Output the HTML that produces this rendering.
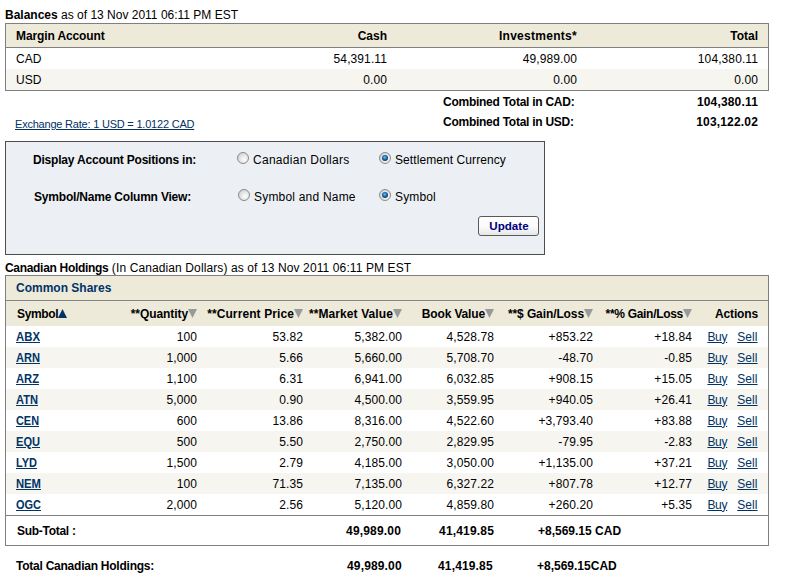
<!DOCTYPE html>
<html><head><meta charset="utf-8">
<style>
*{box-sizing:border-box;margin:0;padding:0}
html,body{width:791px;height:587px;background:#fff;overflow:hidden}
body{font-family:"Liberation Sans",sans-serif;font-size:12px;color:#000;position:relative}
.abs{position:absolute;white-space:nowrap}
b{font-weight:bold}
table{border-collapse:separate;border-spacing:0;position:absolute;table-layout:fixed}
td,th{white-space:nowrap;overflow:visible;font-size:12px;padding:0;vertical-align:middle}
th{font-weight:bold}
.r{text-align:right}
td.r{letter-spacing:0.1px}
.l{text-align:left}
a{color:#003366;text-decoration:underline}
#t1{left:5px;top:23px;width:764px;border:1px solid #7f7f7f}
#t1 tr.h th{height:24px;background:#edeada;border-bottom:1px solid #7f7f7f;padding-top:1px}
#t1 tr.a td{height:21px;background:#fff;padding-top:1px}
#t1 tr.b td{height:21px;background:#f6f5f0;padding-top:1px}
#box{left:5px;top:141px;width:540px;height:114px;background:#ecf0f5;border:1px solid #4d4d4d}
.radio{position:absolute;width:12px;height:12px;border-radius:50%;border:1px solid #8a8c8c;background:radial-gradient(circle at 62% 62%,#fdfdfd 0%,#ececec 35%,#c4c4c4 100%)}
.radio.on::after{content:"";position:absolute;left:2px;top:2px;width:6px;height:6px;border-radius:50%;background:radial-gradient(circle at 45% 40%,#6fcdf8 0%,#2a86c8 28%,#15386a 68%,#15386a 100%)}
#btn{left:478px;top:216px;width:61px;height:20px;border:1px solid #5a5a5a;border-radius:3px;background:linear-gradient(#ffffff 0%,#fbfbfb 55%,#e6e6e6 100%);text-align:center;line-height:19px;color:#000080}
#btn span{display:inline-block;font-weight:bold;font-size:10px;transform:scaleX(1.16);transform-origin:50% 50%}
#t2{left:5px;top:275px;width:764px;border:1px solid #7f7f7f}
#t2 tr.cs td{height:25px;background:#edeada;color:#003366;font-weight:bold;padding-left:10px;border-bottom:1px solid #858585}
#t2 tr.h th{height:25px;background:#edeada;padding-top:1px}
#t2 tr.d td{height:21px}
#t2 tr.e td{background:#f6f5f0}
#t2 tr.st td{height:30px;border-top:1px solid #7f7f7f;font-weight:bold}
a.y{display:inline-block;font-weight:bold;transform-origin:0 50%}
span.g{display:inline-block;width:10px}a.s{letter-spacing:0.1px;margin-right:0.4px}a.bu{letter-spacing:-0.3px}
svg.t{width:9px;height:9px;vertical-align:baseline;display:inline-block}
</style></head><body>
<div class="abs" style="left:5px;top:8px"><b>Balances</b> as of 13 Nov 2011 06:11 PM EST</div>
<table id="t1">
<colgroup><col style="width:10px"><col style="width:200px"><col style="width:171px"><col style="width:190px"><col style="width:181px"><col style="width:10px"></colgroup>
<tr class="h"><th></th><th class="l" style="letter-spacing:-0.12px">Margin Account</th><th class="r">Cash</th><th class="r" style="letter-spacing:0.28px">Investments*</th><th class="r">Total</th><th></th></tr>
<tr class="a"><td></td><td>CAD</td><td class="r">54,391.11</td><td class="r">49,989.00</td><td class="r">104,380.11</td><td></td></tr>
<tr class="b"><td></td><td>USD</td><td class="r">0.00</td><td class="r">0.00</td><td class="r">0.00</td><td></td></tr>
</table>
<div class="abs" style="left:443px;top:95px;letter-spacing:-0.26px"><b>Combined Total in CAD:</b></div>
<div class="abs r" style="right:33px;top:95px;letter-spacing:0.17px"><b>104,380.11</b></div>
<div class="abs" style="left:443px;top:115px;letter-spacing:-0.26px"><b>Combined Total in USD:</b></div>
<div class="abs r" style="right:33px;top:115px;letter-spacing:0.17px"><b>103,122.02</b></div>
<div class="abs" style="left:15px;top:118px;font-size:11px;letter-spacing:-0.21px"><a>Exchange Rate: 1 USD = 1.0122 CAD</a></div>

<div id="box" class="abs"></div>
<div class="abs" style="left:33px;top:153px;letter-spacing:-0.2px"><b>Display Account Positions in:</b></div>
<div class="abs" style="left:34px;top:190px;letter-spacing:-0.2px"><b>Symbol/Name Column View:</b></div>
<div class="radio" style="left:237px;top:152px"></div>
<div class="abs" style="left:253px;top:153px;letter-spacing:0.28px">Canadian Dollars</div>
<div class="radio on" style="left:379px;top:152px"></div>
<div class="abs" style="left:395px;top:153px;letter-spacing:0.08px">Settlement Currency</div>
<div class="radio" style="left:238px;top:189px"></div>
<div class="abs" style="left:254px;top:190px;letter-spacing:0.2px">Symbol and Name</div>
<div class="radio on" style="left:379px;top:189px"></div>
<div class="abs" style="left:395px;top:190px;letter-spacing:0.15px">Symbol</div>
<div id="btn" class="abs"><span>Update</span></div>

<div class="abs" style="left:5px;top:261px"><b style="letter-spacing:-0.31px">Canadian Holdings</b><span style="letter-spacing:0.11px"> (In Canadian Dollars) as of 13 Nov 2011 06:11 PM EST</span></div>
<table id="t2">
<colgroup><col style="width:10px"><col style="width:81px"><col style="width:100px"><col style="width:106px"><col style="width:99px"><col style="width:92px"><col style="width:99px"><col style="width:99px"><col style="width:66px"><col style="width:10px"></colgroup>
<tr class="cs"><td colspan="10">Common Shares</td></tr>
<tr class="h"><th></th><th class="l" style="padding-left:1px"><span style="letter-spacing:-0.35px">Symbol</span><svg class="t" viewBox="0 0 9 9"><path d="M4.5 0L9 9H0z" fill="#003366"/></svg></th><th class="r"><span style="letter-spacing:-0.08px">**Quantity</span><svg class="t" viewBox="0 0 9 9"><path d="M0 0H9L4.5 9z" fill="#999"/></svg></th><th class="r"><span style="letter-spacing:0.1px">**Current Price</span><svg class="t" viewBox="0 0 9 9"><path d="M0 0H9L4.5 9z" fill="#999"/></svg></th><th class="r"><span style="letter-spacing:0.1px">**Market Value</span><svg class="t" viewBox="0 0 9 9"><path d="M0 0H9L4.5 9z" fill="#999"/></svg></th><th class="r"><span style="letter-spacing:-0.15px">Book Value</span><svg class="t" viewBox="0 0 9 9"><path d="M0 0H9L4.5 9z" fill="#999"/></svg></th><th class="r"><span style="letter-spacing:-0.1px">**$ Gain/Loss</span><svg class="t" viewBox="0 0 9 9"><path d="M0 0H9L4.5 9z" fill="#999"/></svg></th><th class="r"><span style="letter-spacing:-0.3px">**% Gain/Loss</span><svg class="t" viewBox="0 0 9 9"><path d="M0 0H9L4.5 9z" fill="#999"/></svg></th><th class="r" style="letter-spacing:-0.14px">Actions</th><th></th></tr>
<tr class="d"><td></td><td><a class="y" style="transform:scaleX(0.9470)">ABX</a></td><td class="r">100</td><td class="r">53.82</td><td class="r">5,382.00</td><td class="r">4,528.78</td><td class="r">+853.22</td><td class="r">+18.84</td><td class="r"><a class="bu">Buy</a><span class="g"></span><a class="s">Sell</a></td><td></td></tr>
<tr class="d e"><td></td><td><a class="y" style="transform:scaleX(0.9231)">ARN</a></td><td class="r">1,000</td><td class="r">5.66</td><td class="r">5,660.00</td><td class="r">5,708.70</td><td class="r">-48.70</td><td class="r">-0.85</td><td class="r"><a class="bu">Buy</a><span class="g"></span><a class="s">Sell</a></td><td></td></tr>
<tr class="d"><td></td><td><a class="y" style="transform:scaleX(0.9322)">ARZ</a></td><td class="r">1,100</td><td class="r">6.31</td><td class="r">6,941.00</td><td class="r">6,032.85</td><td class="r">+908.15</td><td class="r">+15.05</td><td class="r"><a class="bu">Buy</a><span class="g"></span><a class="s">Sell</a></td><td></td></tr>
<tr class="d e"><td></td><td><a class="y" style="transform:scaleX(0.9251)">ATN</a></td><td class="r">5,000</td><td class="r">0.90</td><td class="r">4,500.00</td><td class="r">3,559.95</td><td class="r">+940.05</td><td class="r">+26.41</td><td class="r"><a class="bu">Buy</a><span class="g"></span><a class="s">Sell</a></td><td></td></tr>
<tr class="d"><td></td><td><a class="y" style="transform:scaleX(0.9075)">CEN</a></td><td class="r">600</td><td class="r">13.86</td><td class="r">8,316.00</td><td class="r">4,522.60</td><td class="r">+3,793.40</td><td class="r">+83.88</td><td class="r"><a class="bu">Buy</a><span class="g"></span><a class="s">Sell</a></td><td></td></tr>
<tr class="d e"><td></td><td><a class="y" style="transform:scaleX(0.9225)">EQU</a></td><td class="r">500</td><td class="r">5.50</td><td class="r">2,750.00</td><td class="r">2,829.95</td><td class="r">-79.95</td><td class="r">-2.83</td><td class="r"><a class="bu">Buy</a><span class="g"></span><a class="s">Sell</a></td><td></td></tr>
<tr class="d"><td></td><td><a class="y" style="transform:scaleX(0.9168)">LYD</a></td><td class="r">1,500</td><td class="r">2.79</td><td class="r">4,185.00</td><td class="r">3,050.00</td><td class="r">+1,135.00</td><td class="r">+37.21</td><td class="r"><a class="bu">Buy</a><span class="g"></span><a class="s">Sell</a></td><td></td></tr>
<tr class="d e"><td></td><td><a class="y" style="transform:scaleX(0.9373)">NEM</a></td><td class="r">100</td><td class="r">71.35</td><td class="r">7,135.00</td><td class="r">6,327.22</td><td class="r">+807.78</td><td class="r">+12.77</td><td class="r"><a class="bu">Buy</a><span class="g"></span><a class="s">Sell</a></td><td></td></tr>
<tr class="d"><td></td><td><a class="y" style="transform:scaleX(0.9143)">OGC</a></td><td class="r">2,000</td><td class="r">2.56</td><td class="r">5,120.00</td><td class="r">4,859.80</td><td class="r">+260.20</td><td class="r">+5.35</td><td class="r"><a class="bu">Buy</a><span class="g"></span><a class="s">Sell</a></td><td></td></tr>
<tr class="st"><td></td><td colspan="3" style="letter-spacing:-0.28px;padding-left:1px">Sub-Total :</td><td class="r" style="letter-spacing:0.17px;padding-right:1px">49,989.00</td><td class="r" style="letter-spacing:0.17px">41,419.85</td><td colspan="2" style="text-align:left;padding-left:44px">+8,569.15 CAD</td><td></td><td></td></tr>
</table>
<div class="abs" style="left:16px;top:559px;letter-spacing:-0.24px"><b>Total Canadian Holdings:</b></div>
<div class="abs" style="left:347px;top:559px;letter-spacing:0.15px"><b>49,989.00</b></div>
<div class="abs" style="left:438px;top:559px;letter-spacing:0.15px"><b>41,419.85</b></div>
<div class="abs" style="left:537px;top:559px"><b>+8,569.15CAD</b></div>
</body></html>
